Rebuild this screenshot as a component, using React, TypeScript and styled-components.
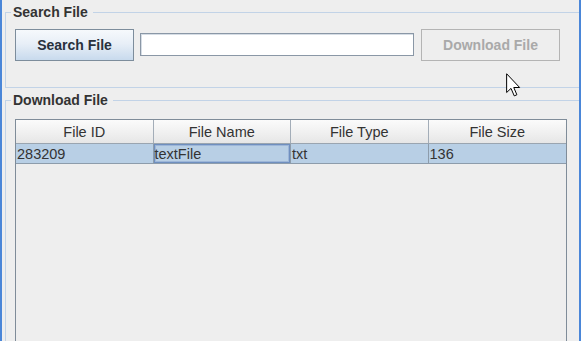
import React from 'react'
import styled, { createGlobalStyle } from 'styled-components'

const GlobalStyle = createGlobalStyle`
  html, body {
    margin: 0;
    padding: 0;
    background: #eeeeee;
  }
  body {
    font-family: "Liberation Sans", Arial, sans-serif;
  }
`

interface FileRow {
  id: string
  name: string
  type: string
  size: string
}

const columns = ['File ID', 'File Name', 'File Type', 'File Size']

const rows: FileRow[] = [
  { id: '283209', name: 'textFile', type: 'txt', size: '136' },
]

export default function App() {
  return (
    <>
      <GlobalStyle />
      <Window>
        <Group>
          <Title>Search File</Title>
          <SearchBar>
            <Button>Search File</Button>
            <TextField type="text" />
            <Button disabled>Download File</Button>
          </SearchBar>
        </Group>
        <Group $second>
          <Title>Download File</Title>
          <ScrollPane>
            <Header>
              {columns.map((c) => (
                <HeaderCell key={c}>{c}</HeaderCell>
              ))}
            </Header>
            {rows.map((r) => (
              <Row key={r.id} $selected>
                <Cell>{r.id}</Cell>
                <Cell $focused>{r.name}</Cell>
                <Cell>{r.type}</Cell>
                <Cell>{r.size}</Cell>
              </Row>
            ))}
          </ScrollPane>
        </Group>
        <Pointer width="15" height="24" viewBox="0 0 12 19">
          <path
            d="M0.5 0.5 L0.5 15.5 L4 12.2 L6.6 18.2 L8.7 17.3 L6.2 11.5 L10.9 11.5 Z"
            fill="#ffffff"
            stroke="#000000"
            strokeWidth="0.8"
            strokeLinejoin="miter"
          />
        </Pointer>
      </Window>
    </>
  )
}

const Window = styled.div`
  position: relative;
  width: 581px;
  height: 341px;
  box-sizing: border-box;
  overflow: hidden;
  background: #eeeeee;
  border-left: 2px solid #4a86d8;
  border-right: 2px solid #4a86d8;
  padding: 5px 0 0 3px;
`

const Group = styled.fieldset<{ $second?: boolean }>`
  margin: ${(p) => (p.$second ? '5px' : '0')} -20px 0 0;
  border: 1px solid #c2d3e7;
  padding: ${(p) => (p.$second ? '12px 0 0 9px' : '10px 0 26px 9px')};
  min-width: 0;
`

const Title = styled.legend`
  margin-left: -4px;
  padding: 0 5px 0 2px;
  font-size: 14px;
  line-height: 14px;
  font-weight: bold;
  color: #333333;
`

const SearchBar = styled.div`
  display: flex;
  align-items: flex-start;
  gap: 6px;
  height: 32px;
`

const Button = styled.button`
  box-sizing: border-box;
  height: 32px;
  padding: 0;
  font-family: "Liberation Sans", Arial, sans-serif;
  font-size: 14px;
  font-weight: bold;
  color: #28313d;
  border: 1px solid #7d8d9c;
  border-radius: 0;
  background: linear-gradient(to bottom, #f6f9fc 0%, #e8eff7 45%, #c8daed 100%);
  width: 119px;

  &:disabled {
    width: 139px;
    margin-left: 1px;
    color: #a9a9a9;
    border-color: #b4b4b4;
    background: #eeeeee;
  }
`

const TextField = styled.input`
  box-sizing: border-box;
  width: 274px;
  height: 23px;
  margin-top: 4px;
  padding: 0 3px;
  border: 1px solid #8a97a6;
  box-shadow: inset 1px 1px 0 #d6dde5;
  background: #ffffff;
  outline: none;
`

const ScrollPane = styled.div`
  box-sizing: border-box;
  width: 552px;
  height: 240px;
  border: 1px solid #7f8c99;
  background: #eeeeee;
`

const Header = styled.div`
  display: grid;
  grid-template-columns: repeat(4, 1fr);
  height: 24px;
  box-sizing: border-box;
  border-bottom: 1px solid #9aa5b0;
  background: linear-gradient(to bottom, #fbfbfb 0%, #efefef 60%, #e6e6e6 100%);
`

const HeaderCell = styled.div`
  display: flex;
  align-items: center;
  justify-content: center;
  font-size: 14.5px;
  color: #333333;
  border-right: 1px solid #a3adb8;
  &:last-child {
    border-right: none;
  }
`

const Row = styled.div<{ $selected?: boolean }>`
  display: grid;
  grid-template-columns: repeat(4, 1fr);
  height: 20px;
  box-sizing: border-box;
  border-bottom: 1px solid #8d9cab;
  background: ${(p) => (p.$selected ? '#b8cfe5' : 'transparent')};
`

const Cell = styled.div<{ $focused?: boolean }>`
  box-sizing: border-box;
  display: flex;
  align-items: center;
  padding-left: 1px;
  font-size: 14.5px;
  color: #333333;
  border-right: 1px solid #8d9cab;
  box-shadow: ${(p) => (p.$focused ? 'inset 0 0 0 1px #6f8fbf, inset 0 0 0 2px #9db6d8' : 'none')};
  &:last-child {
    border-right: none;
  }
`

const Pointer = styled.svg`
  position: absolute;
  left: 504px;
  top: 73px;
`
